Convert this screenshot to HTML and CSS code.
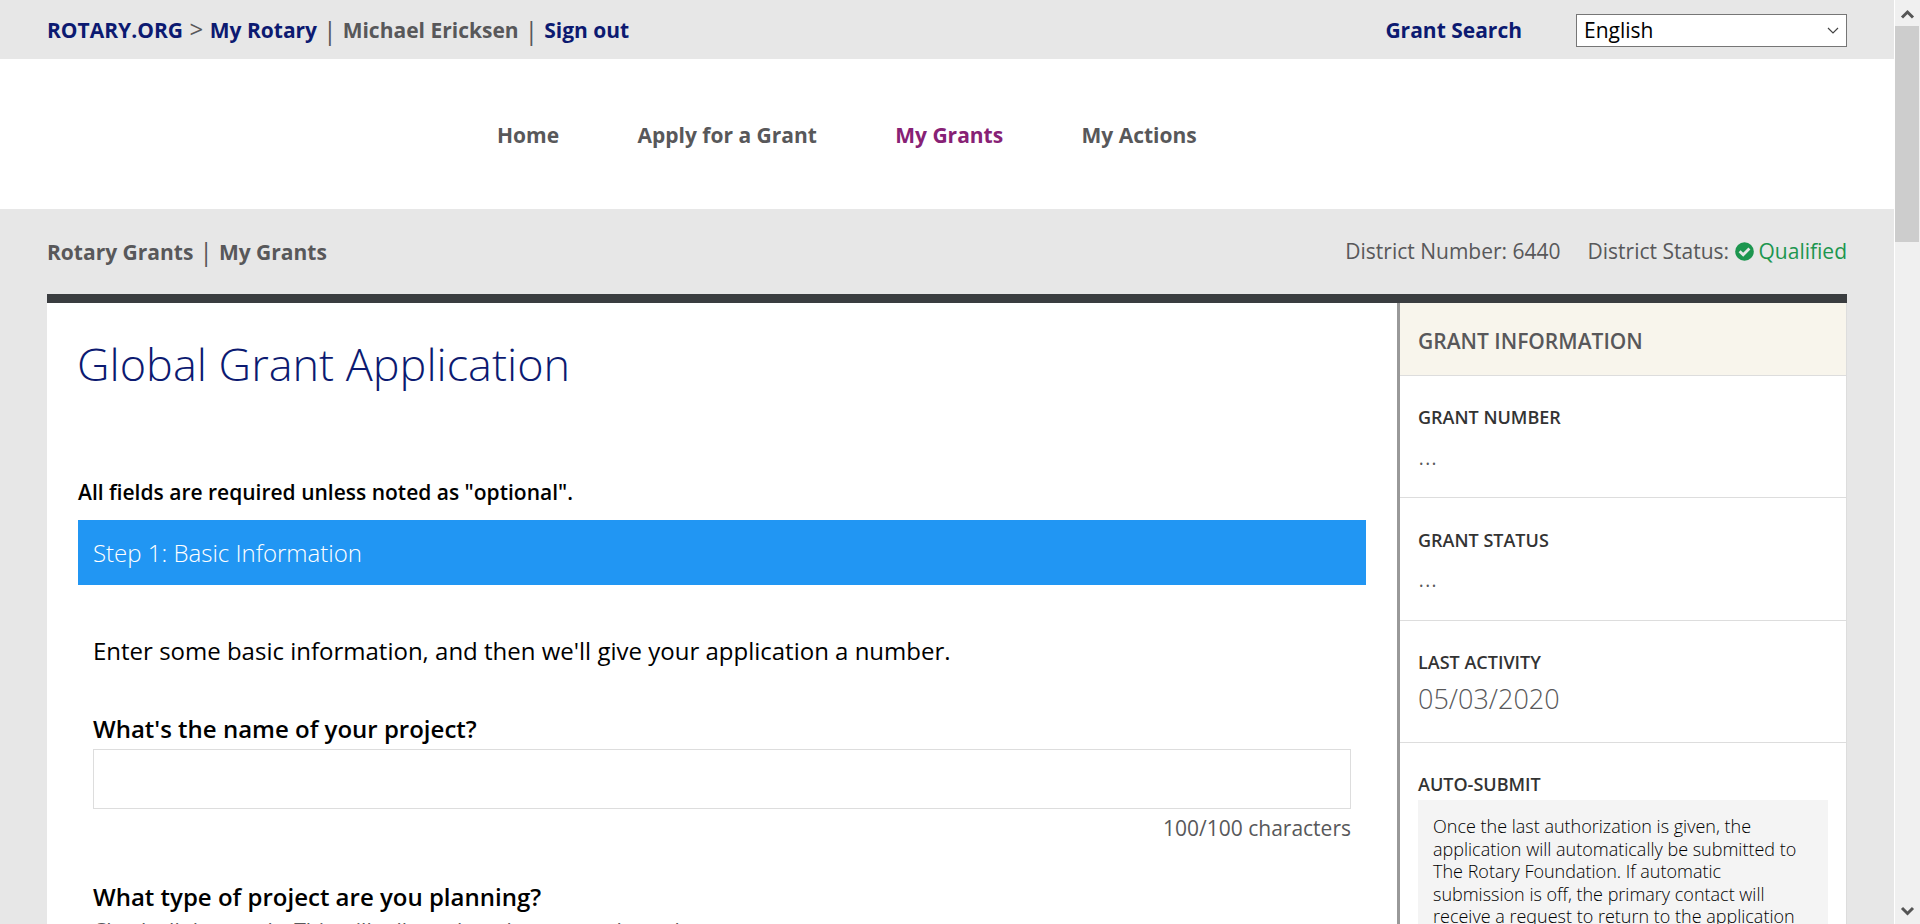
FILE: index.html
```html
<!DOCTYPE html>
<html lang="en">
<head>
<meta charset="utf-8">
<title>Global Grant Application</title>
<link rel="stylesheet" href="styles.css">
</head>
<body>
<div class="page">
  <header class="topbar">
    <div class="account"><a class="link" href="#">ROTARY.ORG</a><span class="gt">&gt;</span><a class="link" href="#">My Rotary</a><span class="sep">|</span><b>Michael Ericksen</b><span class="sep">|</span><a class="link" href="#">Sign out</a></div>
    <a class="link search" href="#">Grant Search</a>
    <div class="language"><span>English</span><svg width="12" height="8" viewBox="0 0 12 8"><path d="M1 1l5 5 5-5" fill="none" stroke="#444" stroke-width="1.2"/></svg></div>
  </header>
  <nav class="nav"><a href="#">Home</a><a href="#">Apply for a Grant</a><a class="active" href="#">My Grants</a><a href="#">My Actions</a></nav>
  <div class="subbar">
    <div class="crumbs"><b>Rotary Grants</b><span class="sep">|</span><b>My Grants</b></div>
    <div class="district"><span>District Number: 6440</span><span class="status">District Status: <svg width="19" height="19" viewBox="0 0 19 19"><circle cx="9.5" cy="9.5" r="9.3" fill="#1d964f"/><path d="M4.6 9.2l3.6 3.6 6.200-6.200" fill="none" stroke="#e7e7e7" stroke-width="2.8"/></svg><span class="ok">Qualified</span></span></div>
  </div>
  <div class="panel">
    <main class="main">
      <h1 class="title">Global Grant Application</h1>
      <p class="required">All fields are required unless noted as "optional".</p>
      <h2 class="step">Step 1: Basic Information</h2>
      <section class="form">
        <p class="intro">Enter some basic information, and then we'll give your application a number.</p>
        <label class="label" for="name">What's the name of your project?</label>
        <input class="input" id="name" type="text">
        <p class="count">100/100 characters</p>
        <p class="label">What type of project are you planning?</p>
        <p class="hint">Check all that apply. This will tell us what else we need to ask.</p>
      </section>
    </main>
    <aside class="side">
      <h3 class="side-title">GRANT INFORMATION</h3>
      <div class="cell"><h4>GRANT NUMBER</h4><p class="dots">...</p></div>
      <div class="cell tall"><h4>GRANT STATUS</h4><p class="dots">...</p></div>
      <div class="cell"><h4>LAST ACTIVITY</h4><p class="date">05/03/2020</p></div>
      <div class="cell last"><h4>AUTO-SUBMIT</h4><p class="note">Once the last authorization is given, the application will automatically be submitted to The Rotary Foundation. If automatic submission is off, the primary contact will receive a request to return to the application</p></div>
    </aside>
  </div>
</div>
<div class="scrollbar">
  <svg width="17" height="26" viewBox="0 0 17 26"><path d="M3 17.5l5.5-5.5 5.5 5.5" fill="none" stroke="#555" stroke-width="3"/></svg>
  <div class="thumb"></div>
  <svg class="down" width="17" height="26" viewBox="0 0 17 26"><path d="M3 10l5.5 5.500 5.500-5.500" fill="none" stroke="#555" stroke-width="3"/></svg>
</div>
</body>
</html>
```
FILE: styles.css
```css
* { box-sizing: border-box; margin: 0; padding: 0; }
body { display: flex; width: 1920px; height: 924px; overflow: hidden; background: #e7e7e7; color: #58585a; font-family: "Open Sans", "Noto Sans", sans-serif; font-size: 21px; }
a { color: inherit; text-decoration: none; font-weight: 700; }
.page { width: 1894px; height: 924px; overflow: hidden; flex: none; }
.topbar { display: flex; align-items: center; height: 59px; padding: 2px 47px 0; line-height: 29px; }
.link { color: #0c1a71; }
.account, .crumbs { display: flex; align-items: center; white-space: nowrap; line-height: 29px; }
.account, .search { padding-bottom: 1px; }
.gt { margin: -4px 6.500px 0; font-size: 24px; }
.sep { width: 26px; font-size: 25px; text-align: center; }
.account .sep { width: 25.600px; }
.search { margin-left: auto; margin-right: 54px; }
.language { display: flex; align-items: center; justify-content: space-between; width: 271px; height: 33px; padding: 0 7px 1px; border: 1px solid #767676; background: #fff; color: #000; }
.language svg { margin-top: 1px; }
.nav { display: flex; gap: 78.300px; height: 150px; padding: 62px 0 0 497px; background: #fff; line-height: 29px; }
.nav .active { color: #872175; }
.subbar { display: flex; align-items: center; justify-content: space-between; height: 85px; padding: 0 47px; }
.crumbs { padding-top: 2px; }
.crumbs .sep { width: 25.500px; margin-top: -2px; }
.district { display: flex; gap: 27px; margin-top: -2px; }
.status svg { margin-right: 5px; vertical-align: -2px; }
.ok { color: #1d964f; }
.panel { display: flex; width: 1800px; height: 700px; margin: 0 47px; border-top: 9px solid #3a3d40; background: #fff; }
.main { width: 1350px; padding: 31px 31px 0; }
.title { height: 139px; margin-left: -1px; color: #0c1a71; font-size: 45px; font-weight: 300; line-height: 60px; }
.required { height: 47px; color: #000; font-weight: 600; line-height: 38px; }
.step { height: 65px; padding-left: 15px; background: #2196f3; color: #fff; font-size: 24px; font-weight: 300; line-height: 66px; }
.form { padding: 48px 15px 0; color: #000; }
.intro { height: 78px; font-size: 24px; line-height: 36px; }
.label { display: block; height: 38px; font-size: 24px; font-weight: 600; line-height: 36px; }
.input { display: block; width: 100%; height: 60px; border: 1px solid #ddd; }
.count { height: 70px; color: #58585a; text-align: right; line-height: 38px; }
.hint { color: #58585a; line-height: 29px; }
.side { width: 450px; border-left: 3px solid #999; border-right: 1px solid #ddd; }
.side-title { height: 73px; padding-left: 18px; border-bottom: 1px solid #ddd; background: #f8f5ec; font-size: 21px; font-weight: 600; line-height: 77px; }
.cell { height: 122px; padding: 28px 18px 0; border-bottom: 1px solid #ddd; }
.cell h4 { height: 29px; color: #333; font-size: 18px; font-weight: 600; line-height: 26px; }
.tall { height: 123px; padding-top: 29px; }
.dots { padding-top: 3px; font-size: 27px; font-weight: 300; line-height: 37px; }
.tall .dots { padding-top: 2px; }
.date { padding-top: 2px; font-size: 27px; font-weight: 300; line-height: 37px; }
.last { height: 400px; }
.note { height: 300px; padding: 15px; background: #f4f4f4; color: #000; font-size: 18px; font-weight: 300; line-height: 22.5px; }
.scrollbar { display: flex; flex-direction: column; align-items: center; width: 26px; height: 924px; border-left: 1px solid #fff; background: #f0f0f0; }
.thumb { width: 25px; height: 216px; border-right: 1px solid #f0f0f0; background: #cdcdcd; }
.down { margin-top: auto; }
```
